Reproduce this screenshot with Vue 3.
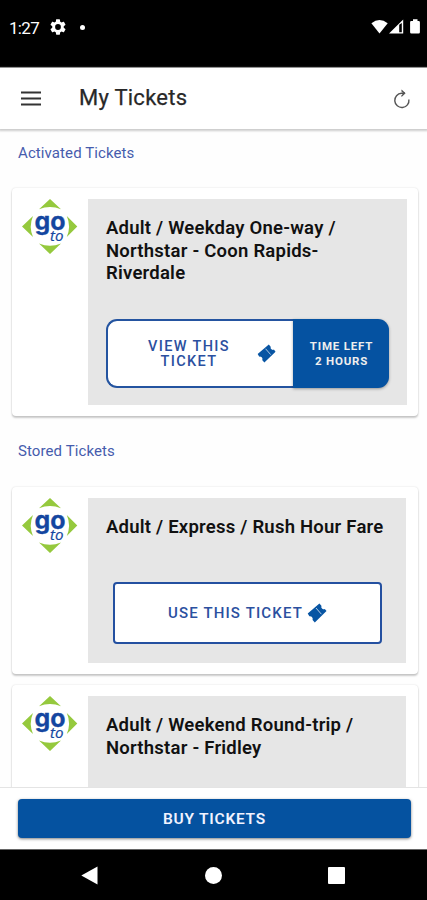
<script setup>
import { h } from 'vue'

const GoToLogo = () =>
  h('svg', { width: 56, height: 56, viewBox: '0 0 56 56', role: 'img', 'aria-label': 'Go-To' }, [
    h('g', { fill: '#95c93d' }, [
      h('path', { d: 'M28 0L39 10.2Q28 6 17 10.2Z' }),
      h('path', { d: 'M28 55L39 44.5Q28 49 17 44.5Z' }),
      h('path', { d: 'M0 27.5L11 17Q6.5 27.5 11 38Z' }),
      h('path', { d: 'M55.3 27.5L44.8 17Q49.3 27.5 44.8 38Z' }),
    ]),
    h('text', { x: 12.5, y: 31, 'font-family': 'Inter, sans-serif', 'font-weight': 700, 'font-size': 24.5, textLength: 31, lengthAdjust: 'spacingAndGlyphs', fill: '#1446a0', stroke: '#1446a0', 'stroke-width': 0.3 }, 'go'),
    h('text', { x: 28, y: 41.5, 'font-family': '"Open Sans", sans-serif', 'font-style': 'italic', 'font-weight': 400, 'font-size': 14.5, textLength: 13.5, lengthAdjust: 'spacingAndGlyphs', fill: '#1446a0', stroke: '#1446a0', 'stroke-width': 0.2 }, 'to'),
  ])

const TicketIcon = () =>
  h('svg', { width: 20, height: 20, viewBox: '0 0 20 20', 'aria-hidden': 'true' }, [
    h('path', { fill: '#0855a3', d: 'M.7 10.4L12.4.6L14.4 2.8Q13.8 5.1 15.6 5.9Q16.9 6.5 17.8 5.9L19.5 8.1L7.8 19.4L5.6 17.1Q6.2 15 4.7 13.8Q3.6 12.9 2.4 13.3Z' }),
    h('path', { stroke: '#c9d8ea', 'stroke-width': 0.9, d: 'M9 5L14.4 11.2' }),
  ])

const stored = [
  { name: 'Adult / Express / Rush Hour Fare' },
  { name: 'Adult / Weekend Round-trip / Northstar - Fridley', tall: true },
]
</script>

<template>
  <div class="screen">
    <div class="status">
      <span class="time">1:27</span>
      <svg class="gear" width="16" height="16" viewBox="2 2 20 20"><path fill="#fff" fill-rule="evenodd" d="M19.14 12.94c.04-.3.06-.61.06-.94 0-.32-.02-.64-.07-.94l2.03-1.58a.49.49 0 0 0 .12-.61l-1.92-3.32a.488.488 0 0 0-.59-.22l-2.39.96c-.5-.38-1.03-.7-1.62-.94l-.36-2.54a.484.484 0 0 0-.48-.41h-3.84c-.24 0-.43.17-.47.41l-.36 2.54c-.59.24-1.13.57-1.62.94l-2.39-.96c-.22-.08-.47 0-.59.22L2.74 8.87c-.12.21-.08.47.12.61l2.03 1.58c-.05.3-.09.63-.09.94s.02.64.07.94l-2.03 1.58a.49.49 0 0 0-.12.61l1.92 3.32c.12.22.37.29.59.22l2.39-.96c.5.38 1.03.7 1.62.94l.36 2.54c.05.24.24.41.48.41h3.84c.24 0 .44-.17.47-.41l.36-2.54c.59-.24 1.13-.56 1.62-.94l2.39.96c.22.08.47 0 .59-.22l1.92-3.32a.49.49 0 0 0-.12-.61zM12 15.6a3.6 3.6 0 1 1 0-7.2 3.6 3.6 0 0 1 0 7.2z"/></svg>
      <i class="dot"></i>
      <svg class="signals" width="50" height="16" viewBox="0 0 50 16">
        <path fill="#fff" d="M.4 4.2Q8.5-2.3 16.7 4.2L8.5 14.4Z" />
        <path fill="#fff" fill-rule="evenodd" d="M18 14.6L32.2.4V14.6ZM28.2 5.8V13.3H30.8V3.9Z" />
        <path fill="#fff" d="M40 2.1h2V.3h4.5v1.8h1.2q1.2 0 1.2 1.2v10q0 1.3-1.3 1.3h-7.2q-1.3 0-1.3-1.3v-10q0-1.2 1.1-1.2z" />
      </svg>
    </div>

    <header class="bar">
      <svg width="20" height="15" viewBox="0 0 20 15"><path stroke="#333" stroke-width="1.8" d="M0 1.5h20M0 7.5h20M0 13.5h20" /></svg>
      <h1>My Tickets</h1>
      <svg class="refresh" width="18" height="20" viewBox="0 0 18 20"><path fill="none" stroke="#555" stroke-width="1.4" d="M12 4.3H8.5A7.1 7.1 0 1 0 15.9 10.5" /><path fill="#555" d="M8.6.6L12.6 4.3L8.6 8L8.3 6.4L10.4 4.3L8.3 2.2Z" /></svg>
    </header>

    <main class="content">
      <h2>Activated Tickets</h2>
      <article class="card">
        <div class="logo"><GoToLogo /></div>
        <div class="panel active">
          <h3>Adult / Weekday One-way / Northstar - Coon Rapids-Riverdale</h3>
          <div class="split">
            <button class="view"><span>VIEW THIS TICKET</span><TicketIcon /></button>
            <div class="left"><span>TIME LEFT</span><span>2 HOURS</span></div>
          </div>
        </div>
      </article>

      <h2 class="second">Stored Tickets</h2>
      <article v-for="t in stored" :key="t.name" class="card">
        <div class="logo"><GoToLogo /></div>
        <div class="panel" :class="{ tall: t.tall }">
          <h3>{{ t.name }}</h3>
          <button v-if="!t.tall" class="use"><span>USE THIS TICKET</span><TicketIcon /></button>
        </div>
      </article>
    </main>

    <footer class="buy"><button>BUY TICKETS</button></footer>
    <nav class="nav">
      <svg width="17" height="19" viewBox="0 0 17 19"><path fill="#fff" d="M16.5.5v18L.3 9.5z" /></svg>
      <i class="circle"></i>
      <i class="square"></i>
    </nav>
  </div>
</template>

<style>
body { margin: 0; }
</style>

<style scoped>
* { box-sizing: border-box; }
svg { display: block; flex: none; }
h1, h2, h3 { margin: 0; }
button { margin: 0; font: inherit; padding: 0; }
.screen {
  width: 427px; height: 900px; display: flex; flex-direction: column;
  overflow: hidden; background: #fefefe; font-family: Roboto, sans-serif;
}
.status {
  height: 68px; flex: none; display: flex; align-items: center; background: #000;
  border-bottom: 1px solid #777; color: #fff; padding: 0 6px 13px 9px;
}
.time { width: 41px; font-size: 17px; letter-spacing: -.7px; padding-top: 1px; }
.dot { width: 5px; height: 5px; border-radius: 50%; background: #fff; margin-left: 14px; }
.signals { margin-left: auto; }
.bar {
  height: 61px; flex: none; display: flex; align-items: center; padding: 0 16px 0 21px;
  background: #fff; box-shadow: 0 1px 2px 1px #ccc; position: relative;
}
.bar h1 { margin-left: 38px; padding-bottom: 1px; font-size: 22px; line-height: 26px; font-weight: 400; color: #282828; letter-spacing: .25px; -webkit-text-stroke: .25px #282828; }
.refresh { margin-left: auto; }
.content { flex: 1; min-height: 0; overflow: hidden; padding: 15px 9px 0 12px; }
h2 { padding-left: 6px; font-size: 15px; line-height: 18px; font-weight: 400; color: #465cad; letter-spacing: .1px; margin-bottom: 26px; }
.second { margin-top: 26px; margin-bottom: 27px; }
.card {
  display: flex; align-items: flex-start; background: #fff; border-radius: 4px; padding: 11px 12px 11px 10px; margin-bottom: 11px;
  box-shadow: 0 2px 2px rgba(0,0,0,.2), 0 0 2px rgba(0,0,0,.14);
}
.logo { width: 66px; flex: none; }
.panel {
  flex: 1; height: 165px; background: #e6e6e6; padding: 18px 18px 19px;
  display: flex; flex-direction: column; justify-content: space-between;
}
.active { height: 206px; padding-bottom: 17px; }
.tall { height: 187px; }
h3 { font-size: 18.5px; line-height: 22.5px; font-weight: 600; color: #111; letter-spacing: .23px; margin-right: -10px; }
.active h3 { margin-right: 0; }
.split { display: flex; width: 283px; height: 69px; }
.view {
  width: 187px; display: flex; align-items: center; background: #fff; border: 2px solid #2454a0; border-right: 0;
  border-radius: 11px 0 0 11px; color: #2b509f; font-size: 14.5px; line-height: 15px; letter-spacing: 1.35px; font-weight: 500;
}
.view span { width: 114px; margin-left: 24px; }
.view svg { margin-left: 11px; width: 19px; height: 19px; }
.left {
  flex: 1; display: flex; flex-direction: column; align-items: center; justify-content: center;
  background: #0552a1; color: #eee; border-radius: 0 11px 11px 0; font-size: 11.5px; line-height: 15px; font-weight: 700; letter-spacing: .8px; padding-left: 1px;
  box-shadow: 0 1px 3px rgba(0,0,0,.35);
}
.use {
  display: flex; align-items: center; justify-content: center; gap: 4px; height: 62px; width: 269px; margin-left: 7px;
  background: #fff; border: 2px solid #2450a0; border-radius: 4px; color: #2b509f; font-size: 15px; letter-spacing: 1.15px; font-weight: 500;
}
.buy { height: 62px; flex: none; background: #fff; border-top: 1px solid #e4e4e4; padding: 11px 16px 0 18px; position: relative; }
.buy button {
  display: block; width: 393px; height: 39px; border: 0; border-radius: 4px; background: #0552a0; color: #f1f3ff;
  font-size: 15.5px; font-weight: 600; letter-spacing: .75px; box-shadow: 0 1px 3px rgba(0,0,0,.5);
}
.nav { height: 51px; flex: none; background: #000; border-top: 1px solid #666; display: flex; align-items: center; padding-left: 81px; }
.circle { width: 17px; height: 17px; border-radius: 50%; background: #fff; margin-left: 107px; }
.square { width: 17px; height: 17px; border-radius: 1px; background: #fff; margin-left: 106px; }
</style>
